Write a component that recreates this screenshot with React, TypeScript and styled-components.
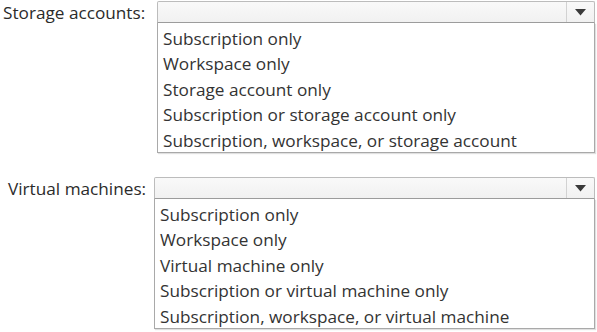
import styled, { createGlobalStyle } from "styled-components";

const GlobalStyle = createGlobalStyle`
  body {
    margin: 0;
    background: #ffffff;
    font-family: "Open Sans", "Liberation Sans", sans-serif;
    color: #333333;
  }
`;

const groups = [
  {
    label: "Storage accounts:",
    labelLeft: 3,
    boxLeft: 157,
    top: 1,
    options: [
      "Subscription only",
      "Workspace only",
      "Storage account only",
      "Subscription or storage account only",
      "Subscription, workspace, or storage account",
    ],
  },
  {
    label: "Virtual machines:",
    labelLeft: 8,
    boxLeft: 154,
    top: 24,
    options: [
      "Subscription only",
      "Workspace only",
      "Virtual machine only",
      "Subscription or virtual machine only",
      "Subscription, workspace, or virtual machine",
    ],
  },
];

const App = () => {
  return (
    <>
      <GlobalStyle />
      <Page>
        {groups.map((g) => (
          <Group key={g.label} $top={g.top}>
            <LabelCol $width={g.boxLeft}>
              <Label $left={g.labelLeft}>{g.label}</Label>
            </LabelCol>
            <Dropdown>
              <Select>
                <SelectValue />
                <ArrowBox>
                  <svg width="11" height="7" viewBox="0 0 11 7">
                    <path d="M0 0 H11 L5.5 6.5 Z" fill="#3a3a3a" />
                  </svg>
                </ArrowBox>
              </Select>
              <List>
                {g.options.map((o) => (
                  <Option key={o}>{o}</Option>
                ))}
              </List>
            </Dropdown>
          </Group>
        ))}
      </Page>
    </>
  );
};

export default App;

const Page = styled.div`
  width: 597px;
  height: 332px;
  display: flex;
  flex-direction: column;
`;

const Group = styled.div<{ $top: number }>`
  display: flex;
  align-items: flex-start;
  margin-top: ${(p) => p.$top}px;
  padding-right: 2px;
`;

const LabelCol = styled.div<{ $width: number }>`
  width: ${(p) => p.$width}px;
  flex-shrink: 0;
  height: 22px;
  display: flex;
  align-items: center;
`;

const Label = styled.span<{ $left: number }>`
  margin-left: ${(p) => p.$left}px;
  font-size: 17.2px;
  color: #2b2b2b;
  white-space: nowrap;
`;

const Dropdown = styled.div`
  flex: 1;
  display: flex;
  flex-direction: column;
`;

const Select = styled.div`
  height: 22px;
  display: flex;
  border: 1px solid #bcbcbc;
  border-bottom-color: #9c9c9c;
  border-radius: 2px 2px 0 0;
  background: linear-gradient(#f9f9f9, #f1f1f1);
  box-sizing: border-box;
`;

const SelectValue = styled.div`
  flex: 1;
`;

const ArrowBox = styled.div`
  width: 27px;
  border-left: 1px solid #d2d2d2;
  display: flex;
  align-items: center;
  justify-content: center;
`;

const List = styled.div`
  border: 1px solid #a9a9a9;
  border-top: none;
  background: #ffffff;
  padding: 3px 0 0 5px;
  height: 130px;
  box-sizing: border-box;
  display: flex;
  flex-direction: column;
  box-shadow: 1px 1px 1px rgba(0, 0, 0, 0.12);
`;

const Option = styled.div`
  height: 25.4px;
  line-height: 25.4px;
  font-size: 17.2px;
  color: #333333;
  white-space: nowrap;
`;
